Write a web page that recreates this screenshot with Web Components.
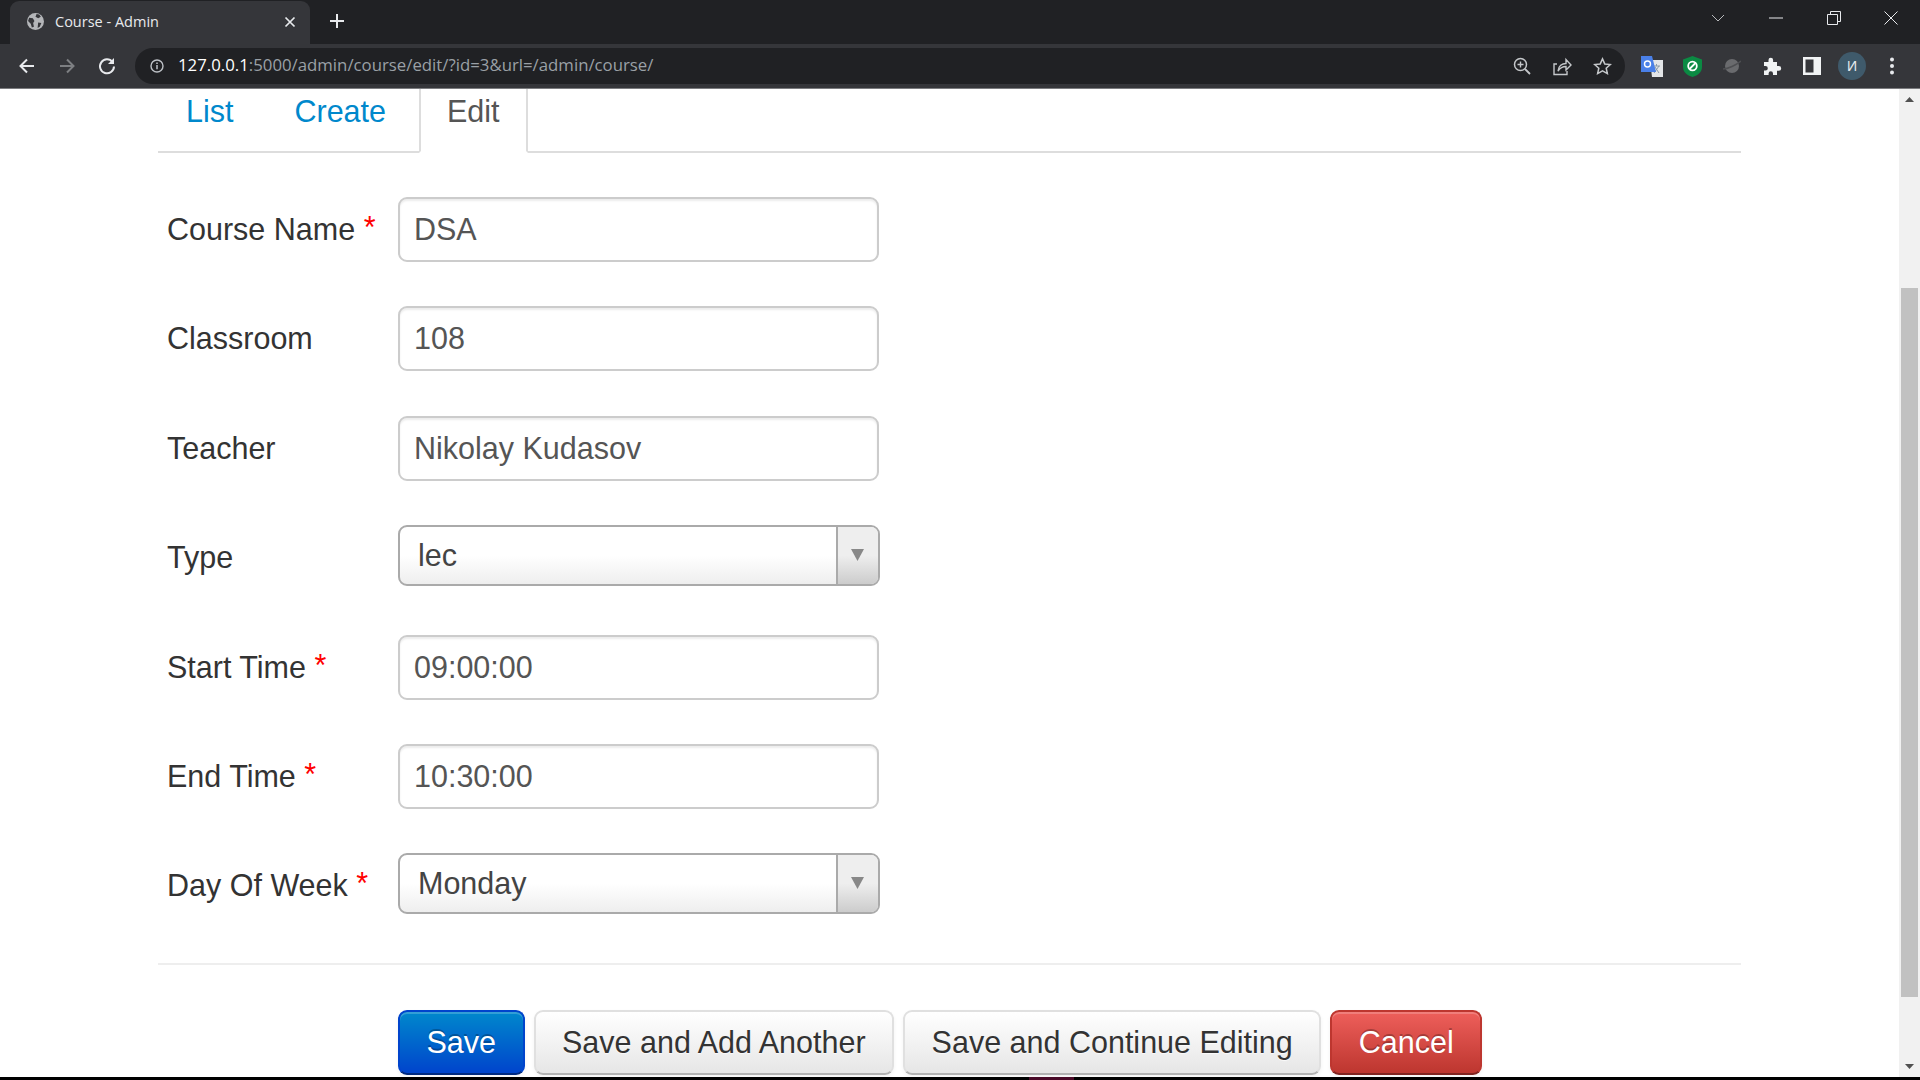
<!DOCTYPE html>
<html lang="en"><head><meta charset="utf-8"><title>Course - Admin</title>
<style>
html,body{margin:0;padding:0;height:100%;background:#fff;overflow:hidden}
body{font-family:"Liberation Sans",Arial,sans-serif}
app-shell{height:1080px}
</style></head>
<body>
<app-shell>
  <browser-chrome slot="chrome" tab-title="Course - Admin"></browser-chrome>
  <admin-tabs></admin-tabs>
  <form-field label="Course Name" required><text-box>DSA</text-box></form-field>
  <form-field label="Classroom"><text-box>108</text-box></form-field>
  <form-field label="Teacher"><text-box>Nikolay Kudasov</text-box></form-field>
  <form-field label="Type"><select-box>lec</select-box></form-field>
  <form-field label="Start Time" required><text-box>09:00:00</text-box></form-field>
  <form-field label="End Time" required><text-box>10:30:00</text-box></form-field>
  <form-field label="Day Of Week" required><select-box>Monday</select-box></form-field>
  <form-actions>
    <action-button kind="primary">Save</action-button>
    <action-button>Save and Add Another</action-button>
    <action-button>Save and Continue Editing</action-button>
    <action-button kind="danger">Cancel</action-button>
  </form-actions>
</app-shell>
<script>
function def(name, css, html, init){
  customElements.define(name, class extends HTMLElement{
    connectedCallback(){
      if(this.shadowRoot) return;
      const r=this.attachShadow({mode:'open'});
      r.innerHTML='<style>'+css+'</style>'+(typeof html==='function'?html(this):html);
      if(init) init(this,r);
    }
  });
}
def('app-shell',`
:host{display:flex;flex-direction:column;width:1920px;height:1080px;overflow:hidden;background:#fff;color:#333;font-family:"Liberation Sans",Arial,sans-serif}
.view{flex:1;display:flex;min-height:0}
.page{flex:1;min-width:0;padding:0 158px 0 158px;box-sizing:border-box;width:1899px;overflow:hidden}
.foot{height:3px;background:#000;display:flex;flex:none}
.foot i{display:block;width:45px;margin-left:1029px;background:#4a0a28}
`,`<slot name="chrome"></slot>
<div class="view"><div class="page"><slot></slot></div><page-scrollbar></page-scrollbar></div>
<div class="foot"><i></i></div>`);

def('browser-chrome',`
:host{display:block;flex:none;height:89px;background:#202124;color:#fff;font-family:"Open Sans","Liberation Sans",sans-serif}
svg{display:block;flex:none}
.strip{height:44px;display:flex;align-items:flex-end;position:relative}
.tab{width:300px;height:43px;margin-left:10px;background:#35363a;border-radius:9px 9px 0 0;display:flex;align-items:center;box-sizing:border-box;padding:0 14px 2px 17px}
.tab .t{font-size:14.5px;margin-left:11px;flex:1;color:#e8eaed;white-space:nowrap}
.plus{margin:0 0 2px 19px;align-self:center}
.win{margin-left:auto;display:flex;align-self:stretch;align-items:center}
.win svg{position:relative;top:-4px}
.bar{height:44px;background:#35363a;display:flex;align-items:center;border-bottom:1px solid #7b7c7f;box-sizing:content-box}
.nav{display:flex;gap:20px;margin-left:17px;width:119px;align-items:center}
.omni{width:1490px;height:36px;background:#202124;border-radius:18px;display:flex;align-items:center;margin-left:-1px;box-sizing:border-box;padding-left:15px}
.url{font-size:16.8px;line-height:22px;margin:-2px 0 0 14px;color:#9aa0a6;white-space:nowrap}
.url b{font-weight:400;color:#fff}
.end{margin-left:auto;display:grid;grid-template-columns:repeat(3,40px);justify-items:center;align-items:center;padding-right:3px}
.ext{display:grid;grid-template-columns:repeat(7,40px);justify-items:center;align-items:center;margin-left:7px}
.av{width:28px;height:28px;border-radius:50%;background:#3f5a6b;color:#e8eaed;font-size:14px;display:flex;align-items:center;justify-content:center;font-family:"Liberation Sans",sans-serif}
`,h=>`
<div class="strip">
  <div class="tab">
    <svg width="17" height="17" viewBox="0 0 16 16"><circle cx="8" cy="8" r="8" fill="#b4b6b9"/><path d="M2 4.5 5.5 5 7 7.5 5.8 9.5 6.5 13 4.6 13.600 3.500 10 1 7.500ZM9 1 11.500 1.500 13 3.500 10.500 5 8 3.500ZM10.500 9 13.500 9.500 12 13 10 14Z" fill="#35363a"/></svg>
    <span class="t">${h.getAttribute('tab-title')}</span>
    <svg width="12" height="12" viewBox="0 0 12 12"><path d="M1.500 1.500 10.500 10.500M10.500 1.500 1.500 10.500" stroke="#e8eaed" stroke-width="1.700"/></svg>
  </div>
  <svg class="plus" width="16" height="16" viewBox="0 0 16 16"><path d="M8 1v14M1 8h14" stroke="#e8eaed" stroke-width="2"/></svg>
  <div class="win">
    <svg width="14" height="8" viewBox="0 0 14 8" style="margin-right:44px"><path d="M1 1 7 7 13 1" fill="none" stroke="#b8babd" stroke-width="1"/></svg>
    <svg width="14" height="2" viewBox="0 0 14 2" style="margin-right:44px"><path d="M0 1h14" stroke="#e8eaed" stroke-width="1"/></svg>
    <svg width="14" height="14" viewBox="0 0 14 14" style="margin-right:43px"><path d="M.5 3.500h10v10H.5ZM3.500 3.500V.5h10v10h-3" fill="none" stroke="#e8eaed" stroke-width="1"/></svg>
    <svg width="14" height="14" viewBox="0 0 14 14" style="margin-right:22px"><path d="M.5.5 13.500 13.500M13.500.5 .5 13.500" stroke="#e8eaed" stroke-width="1"/></svg>
  </div>
</div>
<div class="bar">
  <div class="nav">
    <svg width="20" height="20" viewBox="0 0 20 20"><path d="M17 10H4M10 3.500 3.500 10 10 16.500" fill="none" stroke="#e8eaed" stroke-width="2"/></svg>
    <svg width="20" height="20" viewBox="0 0 20 20"><path d="M3 10H16M10 3.500 16.500 10 10 16.500" fill="none" stroke="#7d7f82" stroke-width="2"/></svg>
    <svg width="20" height="20" viewBox="0 0 20 20"><path d="M15.500 6A7 7 0 1 0 17 10.500" fill="none" stroke="#e8eaed" stroke-width="2"/><path d="M17 2v6h-6Z" fill="#e8eaed"/></svg>
  </div>
  <div class="omni">
    <svg width="14" height="14" viewBox="0 0 14 14"><circle cx="7" cy="7" r="6" fill="none" stroke="#bdc1c6" stroke-width="1.400"/><path d="M7 6v4.200M7 3.600v1.400" stroke="#bdc1c6" stroke-width="1.500"/></svg>
    <span class="url"><b>127.0.0.1</b>:5000/admin/course/edit/?id=3&amp;url=/admin/course/</span>
    <div class="end">
      <svg width="18" height="18" viewBox="0 0 18 18"><circle cx="7.500" cy="7.500" r="6" fill="none" stroke="#c4c7ca" stroke-width="1.500"/><path d="M7.500 4.500v6M4.500 7.500h6" stroke="#c4c7ca" stroke-width="1.400"/><path d="M12 12l5 5" stroke="#c4c7ca" stroke-width="1.800"/></svg>
      <svg width="20" height="20" viewBox="0 0 20 20" fill="none" stroke="#c4c7ca" stroke-width="1.400"><path d="M5 8H2v10.500h13V15"/><path d="M6 15c.5-5 4-7.500 8-7.500V3.500l5 5.500-5 5v-3.500c-3.500 0-6 1.500-8 4.500Z"/></svg>
      <svg width="19" height="19" viewBox="0 0 20 20"><path d="M10 2l2.400 5.300 5.800.6-4.300 3.900 1.200 5.700L10 14.600 4.900 17.500l1.200-5.700L1.800 7.900l5.800-.6Z" fill="none" stroke="#c4c7ca" stroke-width="1.600"/></svg>
    </div>
  </div>
  <div class="ext">
    <svg width="22" height="21" viewBox="0 0 22 21"><path d="M9 4h13v17H11Z" fill="#e3e5e7"/><path d="M12 10h7M15.500 8v2M13 17l5-7M14 11l4 6" stroke="#8a9aa8" stroke-width="1" fill="none"/><path d="M0 0h11l4 16H0Z" fill="#4a80e8"/><circle cx="6.500" cy="8" r="3" fill="none" stroke="#fff" stroke-width="1.400"/></svg>
    <svg width="19" height="21" viewBox="0 0 19 21"><path d="M9.500 0 19 3.500V11c0 5-4 8.500-9.500 10C4 19.500 0 16 0 11V3.500Z" fill="#0b8a43"/><circle cx="9.500" cy="10" r="4.300" fill="none" stroke="#fff" stroke-width="1.800"/><path d="M6.500 13 12.500 7" stroke="#fff" stroke-width="1.800"/></svg>
    <svg width="18" height="18" viewBox="0 0 18 18"><circle cx="9" cy="9" r="7" fill="#6a6b6e"/><path d="M0 12C5 12 13 8 18 4" stroke="#4e4f52" stroke-width="1.500" fill="none"/></svg>
    <svg width="20" height="20" viewBox="0 0 20 20"><path d="M2 6h4.500V4a2.300 2.300 0 0 1 4.600 0v2H15v4h1.800a2.400 2.400 0 0 1 0 4.800H15V19H11v-1.500a2.200 2.200 0 0 0-4.400 0V19H2v-4.500h1.500a2.300 2.300 0 0 0 0-4.600H2Z" fill="#f1f3f4"/></svg>
    <svg width="18" height="18" viewBox="0 0 18 18"><path d="M0 0h18v18H0Z" fill="#f1f3f4"/><path d="M2.500 2.500h8v13h-8Z" fill="#35363a"/></svg>
    <span class="av">И</span>
    <svg width="6" height="18" viewBox="0 0 6 18"><circle cx="3" cy="2.500" r="2" fill="#e8eaed"/><circle cx="3" cy="9" r="2" fill="#e8eaed"/><circle cx="3" cy="15.500" r="2" fill="#e8eaed"/></svg>
  </div>
</div>`);

def('admin-tabs',`
:host{display:flex;height:64px;box-sizing:border-box;border-bottom:2px solid #ddd;margin-bottom:44px;font-size:30.500px}
a{display:block;color:#08c;text-decoration:none;line-height:44px}
a.first{padding-left:28px;padding-right:31px}
a.second{padding-left:30px;padding-right:33px}
a.on{color:#555;background:#fff;border:2px solid #ddd;border-top:0;border-bottom:2px solid #fff;height:64px;box-sizing:border-box;padding:0 26px}
`,`<a class="first">List</a><a class="second">Create</a><a class="on">Edit</a>`);

def('form-field',`
:host{display:flex;height:65px;margin-bottom:44.400px;font-size:30.500px;color:#333}
label{width:240px;box-sizing:border-box;padding-left:9px;line-height:64px;white-space:nowrap;flex:none}
.req{color:#f00;position:relative;top:-2px}
`,h=>`<label>${h.getAttribute('label')}${h.hasAttribute('required')?'<span class="req"> *</span>':''}</label><slot></slot>`);

def('text-box',`
:host{display:block;width:481px;height:65px;box-sizing:border-box;border:2px solid #ccc;border-radius:9px;padding:0 14px;line-height:61px;color:#555;background:#fff;box-shadow:inset 0 2px 2px rgba(0,0,0,.075);font-size:30.500px;white-space:nowrap}
`,`<slot></slot>`);

def('select-box',`
:host{display:flex;width:482px;height:61px;box-sizing:border-box;border:2px solid #aaa;border-radius:9px;overflow:hidden;background:linear-gradient(#fff 50%,#eee);color:#444;font-size:30.500px}
.v{flex:1;padding-left:18px;line-height:56px;white-space:nowrap}
.a{width:42px;flex:none;border-left:2px solid #aaa;box-sizing:border-box;background:linear-gradient(#eee 50%,#ccc);display:flex;align-items:center;justify-content:center;padding:0 2px 2px 0}
`,`<div class="v"><slot></slot></div><div class="a"><svg width="13" height="12" viewBox="0 0 13 12"><path d="M0 0h13L6.500 12Z" fill="#888"/></svg></div>`);

def('form-actions',`
:host{display:flex;gap:9px;border-top:2px solid #eee;padding:45px 0 0 240px;height:68px;box-sizing:content-box}
`,`<slot></slot>`);

def('action-button',`
:host{display:block;flex:none;height:65px;box-sizing:border-box;padding:0 26.500px;line-height:61px;font-size:30.500px;border-radius:9px;border:2px solid;white-space:nowrap;color:#333;text-shadow:0 1px 1px rgba(255,255,255,.75);background:linear-gradient(#fff,#e6e6e6);border-color:#e0e0e0 #e0e0e0 #b3b3b3;box-shadow:inset 0 2px 0 rgba(255,255,255,.2),0 2px 4px rgba(0,0,0,.05)}
:host([kind=primary]){color:#fff;text-shadow:0 -2px 0 rgba(0,0,0,.25);background:linear-gradient(#08c,#04c);border-color:#04c #04c #002a80}
:host([kind=danger]){color:#fff;text-shadow:0 -2px 0 rgba(0,0,0,.25);background:linear-gradient(#ee5f5b,#bd362f);border-color:#bd362f #bd362f #802420}
`,`<slot></slot>`);

def('page-scrollbar',`
:host{display:flex;flex-direction:column;flex:none;width:21px;background:#f1f1f1;align-items:center}
.up,.dn{height:21px;display:flex;align-items:center;justify-content:center;flex:none}
.gap1{height:178px;flex:none}
.th{width:17px;height:709px;background:#c1c1c1;flex:none}
`,`<div class="up"><svg width="9" height="5" viewBox="0 0 9 5"><path d="M4.500 0 9 5H0Z" fill="#505050"/></svg></div><div class="gap1"></div><div class="th"></div><div style="flex:1"></div><div class="dn"><svg width="9" height="5" viewBox="0 0 9 5"><path d="M0 0H9L4.500 5Z" fill="#505050"/></svg></div>`);
</script>
</body></html>
